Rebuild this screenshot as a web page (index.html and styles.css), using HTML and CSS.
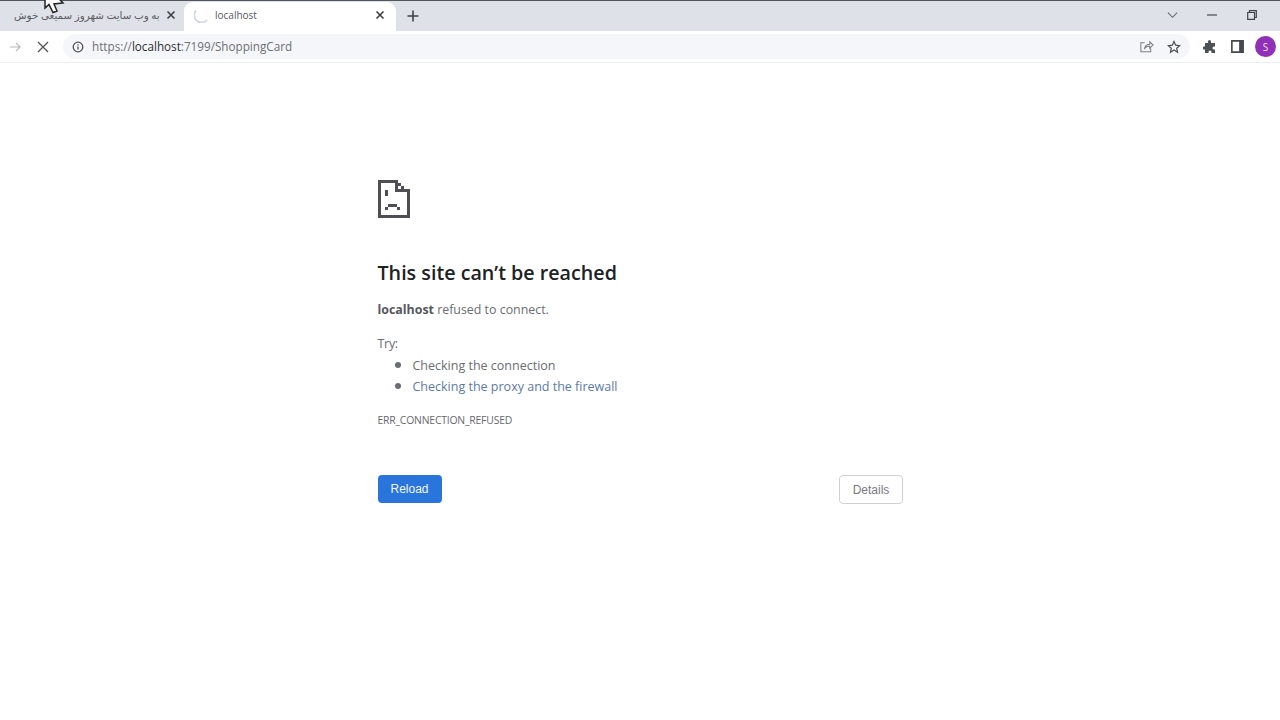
FILE: index.html
```html
<!DOCTYPE html>
<html lang="en">
<head>
<meta charset="utf-8">
<title>localhost</title>
<link rel="stylesheet" href="styles.css">
</head>
<body>
<div class="browser">
  <header class="tabstrip">
    <div class="tab tab-inactive">
      <span class="tab-title-fa" dir="rtl">به وب سایت شهروز سمیعی خوش</span>
      <svg class="tab-close" viewBox="0 0 10 10"><path d="M1.5 1.5l7 7M8.5 1.5l-7 7"/></svg>
    </div>
    <div class="tab tab-active">
      <svg class="spinner" viewBox="0 0 16 16"><path d="M2 3.5A6.5 6.5 0 0 0 13 13"/></svg>
      <span class="tab-title">localhost</span>
      <svg class="tab-close" viewBox="0 0 10 10"><path d="M1.5 1.5l7 7M8.5 1.5l-7 7"/></svg>
    </div>
    <svg class="new-tab" viewBox="0 0 12 12"><path d="M6 .5v11M.5 6h11"/></svg>
    <div class="window-controls">
      <svg class="win-chevron" viewBox="0 0 12 8"><path d="M1 1.5l5 5 5-5"/></svg>
      <svg class="win-min" viewBox="0 0 10 2"><path d="M0 1h10"/></svg>
      <svg class="win-restore" viewBox="0 0 10 10"><path d="M.7 2.5h6.8v6.8H.7zM2.5 2.3V.7h6.8v6.8H7.7"/></svg>
    </div>
  </header>
  <nav class="toolbar">
    <svg class="nav-forward" viewBox="0 0 14 12"><path d="M1 6h11M7.5 1.5L12 6l-4.500 4.500"/></svg>
    <svg class="nav-stop" viewBox="0 0 12 12"><path d="M1 1l10 10M11 1L1 11"/></svg>
    <div class="omnibox">
      <svg class="info" viewBox="0 0 12 12"><circle cx="6" cy="6" r="4.800"/><path d="M6 5.400v3.200M6 3.200v1.200"/></svg>
      <span class="url">https://<b>localhost</b>:7199/ShoppingCard</span>
      <span class="omni-actions">
        <svg class="share" viewBox="0 0 16 16"><path d="M6 4H2v9.500h10.500V10M6 10c.5-3 2.500-4.500 5.500-4.500V3L15 6.500 11.500 10V7.500C9 7.500 7.500 8.500 6 10z"/></svg>
        <svg class="star" viewBox="0 0 16 16"><path d="M8 1.800l1.900 4.100 4.500.5-3.300 3.100.9 4.500L8 11.300l-4 2.700.9-4.500L1.600 6.400l4.500-.5z"/></svg>
      </span>
    </div>
    <svg class="puzzle" viewBox="0 0 13 14"><path d="M5 1.500a1.500 1.500 0 0 1 3 0V3h4v3.500h-1a1.500 1.500 0 0 0 0 3h1V13H8.500v-1a1.500 1.500 0 0 0-3 0v1H2V9.500H1a1.500 1.500 0 0 1 0-3h1V3h3z"/></svg>
    <svg class="sidepanel" viewBox="0 0 12 12"><path d="M.8.800h10.400v10.400H.8z"/><path class="panel-fill" d="M7.500 1h3.500v10H7.500z"/></svg>
    <span class="avatar">S</span>
  </nav>
  <main class="page">
    <div class="error-card">
      <svg class="sad-file" viewBox="0 0 32 38" shape-rendering="crispEdges">
        <path d="M0 0h20v3H3v32h26V15h3v23H0z"/>
        <path d="M20 3h3v3h-3zM23 6h3v3h-3zM26 9h3v3h-3zM29 12h3v3h-3z"/>
        <path d="M17 0h3v9h12v3H17z"/>
        <path d="M7 10h3v6H7zM7 27h3v3H7zM19 27h3v3h-3zM10 24h9v3h-9z"/>
      </svg>
      <h1 class="heading">This site can’t be reached</h1>
      <p class="summary"><b>localhost</b> refused to connect.</p>
      <p class="try">Try:</p>
      <ul class="suggestions">
        <li>Checking the connection</li>
        <li><a class="link">Checking the proxy and the firewall</a></li>
      </ul>
      <p class="code">ERR_CONNECTION_REFUSED</p>
      <div class="buttons">
        <button class="btn-reload">Reload</button>
        <button class="btn-details">Details</button>
      </div>
    </div>
  </main>
  <svg class="cursor" viewBox="0 0 22 24"><path d="M2-16V8l4-3.500 4 8 4-1.500-3-7 9-1z"/></svg>
</div>
</body>
</html>
```
FILE: styles.css
```css
* { box-sizing: border-box; }
html, body { margin: 0; height: 100%; background: #fff; overflow: hidden; }
body { font-family: "Open Sans", "Noto Sans", sans-serif; color: #5f6368; }
svg { display: block; flex: none; }
.browser { position: relative; height: 720px; overflow: hidden; }

.tabstrip { display: flex; align-items: flex-end; height: 31px; background: #dfe1e9; border-top: 1px solid #53555c; }
.tab { display: flex; align-items: center; height: 29px; flex: none; padding-bottom: 4px; }
.tab-inactive { width: 184px; padding-left: 14px; padding-right: 9px; gap: 6px; }
.tab-title-fa { display: block; width: 146px; font: 10.3px "Noto Sans", "DejaVu Sans", sans-serif; color: #5b5d63; line-height: 16px; white-space: nowrap; }
.tab-active { width: 212px; padding-left: 10px; padding-right: 11px; background: #fff; border-radius: 9px 9px 0 0; }
.tab-title { flex: 1; margin-left: 5px; font-size: 10px; color: #55585e; }
.spinner { width: 16px; height: 16px; fill: none; stroke: #cfd6ea; stroke-width: 1.800; }
.tab-close { width: 10px; height: 10px; fill: none; stroke: #3c4043; stroke-width: 1.600; }
.new-tab { width: 12px; height: 12px; margin: 0 0 9px 11px; fill: none; stroke: #3f4247; stroke-width: 1.600; }
.window-controls { display: flex; align-items: center; margin-left: auto; height: 29px; padding-bottom: 4px; padding-right: 23px; }
.win-chevron { width: 11px; height: 8px; fill: none; stroke: #5f6368; stroke-width: 1.100; }
.win-min { width: 10px; height: 2px; margin-left: 29px; fill: none; stroke: #4a4c52; stroke-width: 1.200; }
.win-restore { width: 10px; height: 10px; margin-left: 30px; fill: none; stroke: #3f4247; stroke-width: 1.200; }

.toolbar { display: flex; align-items: center; height: 32px; padding: 0 4px 0 9px; background: #fff; border-bottom: 1px solid #eceef2; }
.nav-forward { width: 13px; height: 12px; fill: none; stroke: #b6b9be; stroke-width: 1.300; }
.nav-stop { width: 12px; height: 12px; margin-left: 15px; fill: none; stroke: #53565b; stroke-width: 1.400; }
.omnibox { display: flex; align-items: center; flex: 1; height: 25px; margin-left: 14px; padding: 0 9px; background: #f5f6f9; border-radius: 13px; }
.info { width: 12px; height: 12px; fill: none; stroke: #4f5257; stroke-width: 1.300; }
.url { margin-left: 8px; padding-bottom: 2px; font-size: 11.7px; color: #6d7075; white-space: nowrap; }
.url b { font-weight: 400; color: #2c2e31; }
.omni-actions { display: flex; align-items: center; gap: 13.5px; margin-left: auto; }
.share { width: 15px; height: 15px; fill: none; stroke: #7a7d82; stroke-width: 1.100; }
.star { width: 14px; height: 14px; fill: none; stroke: #4a4d52; stroke-width: 1.400; }
.puzzle { width: 13px; height: 14px; margin-left: 13px; fill: #4d5055; }
.sidepanel { width: 13px; height: 13px; margin-left: 15px; fill: none; stroke: #45484d; stroke-width: 1.500; }
.panel-fill { fill: #45484d; stroke: none; }
.avatar { display: flex; align-items: center; justify-content: center; width: 21px; height: 21px; margin-left: 11px; border-radius: 50%; background: #9030b8; color: #f3dff8; font-size: 10px; }

.page { padding: 117px 0 0 377.5px; }
.error-card { width: 525.5px; }
.sad-file { width: 32px; height: 38px; fill: #4d4f53; }
.heading { margin: 41px 0 0; font-size: 19.7px; line-height: 28px; font-weight: 600; color: #202124; }
.summary { margin: 13px 0 0; font-size: 12.4px; line-height: 20px; color: #6a6d72; }
.summary b { font-weight: 700; color: #55585c; }
.try { margin: 14px 0 0; font-size: 12.5px; line-height: 20px; letter-spacing: -.3px; color: #6a6d72; }
.suggestions { margin: 0; padding-left: 35px; font-size: 12.5px; line-height: 21px; color: #6a6d72; }
.suggestions li { height: 21px; }
.suggestions li::marker { font-size: 16px; }
.link { color: #5b7aa8; }
.code { margin: 16px 0 0; font-size: 10.4px; line-height: 16px; letter-spacing: -.2px; color: #66696e; }
.buttons { display: flex; align-items: flex-start; justify-content: space-between; margin-top: 47px; }
.btn-reload { width: 64px; height: 28px; padding: 0; border: 0; border-radius: 4px; background: #2a75dc; color: #f2f7fe; font: 12px "Liberation Sans", sans-serif; }
.btn-details { width: 64px; height: 29px; padding: 0; border: 1px solid #d0d1d4; border-radius: 4px; background: #fff; color: #777a7f; font: 12px "Liberation Sans", sans-serif; }

.cursor { position: absolute; left: 43px; top: 0; width: 22px; height: 24px; fill: #fff; stroke: #222; stroke-width: 1.500; }
```
